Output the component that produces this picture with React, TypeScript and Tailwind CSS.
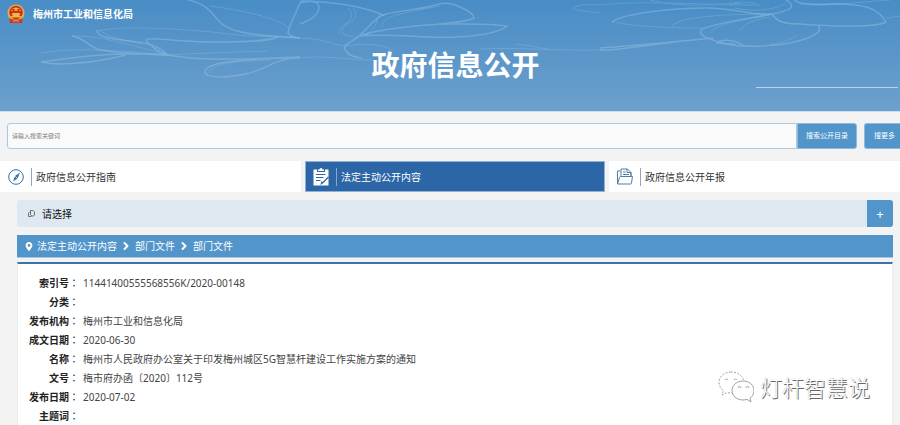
import { ChevronRight } from "lucide-react";
import { FaMapMarkerAlt } from "react-icons/fa";

/* ----------------------------- Data ----------------------------- */
const records: { label: string; value: string }[] = [
    { label: "索引号", value: "11441400555568556K/2020-00148" },
    { label: "分类", value: "" },
    { label: "发布机构", value: "梅州市工业和信息化局" },
    { label: "成文日期", value: "2020-06-30" },
    { label: "名称", value: "梅州市人民政府办公室关于印发梅州城区5G智慧杆建设工作实施方案的通知" },
    { label: "文号", value: "梅市府办函〔2020〕112号" },
    { label: "发布日期", value: "2020-07-02" },
    { label: "主题词", value: "" },
];

const crumbs = ["法定主动公开内容", "部门文件", "部门文件"];

/* ----------------------------- Icons ----------------------------- */
function Emblem() {
    return (
        <svg viewBox="0 0 36 38" className="h-5 w-[18px] shrink-0" aria-hidden="true">
            <circle cx="18" cy="17" r="17" fill="#d9b54a" />
            <circle cx="18" cy="16" r="13.5" fill="#d42a1c" />
            <path d="M18 4l1.4 3.6h3.8l-3 2.3 1.2 3.7-3.4-2.2-3.4 2.2 1.2-3.7-3-2.3h3.8z" fill="#f3cf4b" />
            <circle cx="10" cy="12" r="1.3" fill="#f3cf4b" />
            <circle cx="26" cy="12" r="1.3" fill="#f3cf4b" />
            <circle cx="12" cy="8" r="1.1" fill="#f3cf4b" />
            <circle cx="24" cy="8" r="1.1" fill="#f3cf4b" />
            <path d="M11 17h14l2 3h-2v3h3v3H8v-3h3v-3H9z" fill="#e8bd45" />
            <path d="M5 28c5 2 9 2 13 0 4 2 8 2 13 0l-1 9H6z" fill="#d8321f" />
            <path d="M11 31h14M12 35l6-3 6 3" fill="none" stroke="#e8bd45" strokeWidth="1.4" />
        </svg>
    );
}

function CompassIcon() {
    return (
        <svg viewBox="0 0 32 32" className="h-4 w-4 shrink-0" fill="none" aria-hidden="true">
            <circle cx="16" cy="16" r="14.6" stroke="#356f9f" strokeWidth="2" />
            <path d="M24 7l-5 12-9 6 4-11z" fill="#356f9f" />
            <path d="M14.5 14.5l4 4" stroke="#fff" strokeWidth="1.6" />
        </svg>
    );
}

function ClipboardIcon() {
    return (
        <svg viewBox="0 0 32 36" className="h-[18px] w-4 shrink-0" aria-hidden="true">
            <path d="M2 3h6v5h16V3h6a1 1 0 011 1v30a1 1 0 01-1 1H2a1 1 0 01-1-1V4a1 1 0 011-1z" fill="#fff" />
            <path d="M10 3h3a3 3 0 016 0h3v3H10z" fill="#fff" />
            <path d="M6 13h19M6 19h15M6 25h9" stroke="#2d66a4" strokeWidth="2.2" />
            <path d="M31 18L20 29l-3 2 1-4" fill="none" stroke="#2d66a4" strokeWidth="2.6" />
        </svg>
    );
}

function FolderIcon() {
    return (
        <svg
            viewBox="0 0 32 34"
            className="h-[17px] w-4 shrink-0"
            fill="none"
            stroke="#4f7ea8"
            strokeWidth="2"
            strokeLinejoin="round"
            aria-hidden="true"
        >
            <path d="M1 32V6h6M28 17V9" />
            <path d="M8 17V2h13l7 7v8M20 2v7h8" />
            <path d="M12 8h5M12 13h12" />
            <path d="M1 32l4-13c0-1 1-2 2-2h24l-2 13c0 1-1 2-2 2z" />
        </svg>
    );
}

function PagesIcon() {
    return (
        <svg viewBox="0 0 14 14" className="h-[7px] w-[7px] shrink-0" fill="none" stroke="#555" strokeWidth="1.6" aria-hidden="true">
            <path d="M5 1h5l3 3v6l-2 2H8L5 10z" />
            <path d="M4 3L1 6v7h6" />
        </svg>
    );
}

function ChatIcon() {
    return (
        <svg viewBox="0 0 36 32" className="h-8 w-9 shrink-0" fill="#fff" stroke="#8a8a8a" strokeWidth="0.8" aria-hidden="true">
            <path d="M13 1C6 1 1 5.500 1 11.500c0 3.500 1.700 6 4.500 8L4 24l5-2.500c1.500.4 3 .6 4.500.5C20 22 26 18 26 11.500 26 5.500 20 1 13 1z" strokeDasharray="2 1.5" />
            <path d="M25 10c-6 0-11 4-11 9.500S19 29 25 29c1.400 0 2.700-.2 4-.6l4 2.400-1-3.700c2.400-1.800 4-4.400 4-7.600C36 14 31 10 25 10z" />
            <path d="M7 9a1.700 1.700 0 013 0M16 9a1.700 1.700 0 013 0M20 17a1.500 1.500 0 013 0M28 17a1.500 1.500 0 013 0" fill="none" />
        </svg>
    );
}

/* ----------------------------- Header art ----------------------------- */
function FloralLines() {
    return (
        <svg
            viewBox="0 0 900 111"
            preserveAspectRatio="none"
            className="absolute inset-0 h-full w-full"
            fill="none"
            stroke="#a9cdea"
            aria-hidden="true"
        >
            <g strokeWidth="1.5" opacity="0.36">
                <path d="M188 0C207 3 212 14 220 22C230 33 252 35 300 38" />
                <path d="M168 55C158 52 150 46 146 40C150 36 170 42 210 42C250 42 270 41 278 37" />
                <path d="M97 30C95 39 125 40 145 43C157 46 163 50 168 55C205 62 250 58 300 58" />
                <path d="M72 36C84 38 86 44 97 49C115 54 145 54 168 55" />
                <path d="M168 55C110 52 75 57 41 62C65 67 100 61 126 55" />
                <path d="M205 73C202 61 250 59 300 57C270 60 265 71 245 74C222 79 207 77 205 73" />
                <path d="M300 24C312 20 322 12 318 4C315 0 307 1 300 3C292 22 288 28 288 33C291 38 296 37 300 38" />
                <path d="M300 1C350 2 376 12 383 15C374 19 372 24 362 33C355 42 340 44 346 51C350 57 356 57 362 58" />
                <path d="M383 15C400 10 425 9 435 5C444 2 450 3 455 5C468 10 474 15 474 18C465 23 450 22 440 24" />
                <path d="M360 36C380 28 420 26 440 24C465 24 490 23 507 26C500 32 480 36 455 37C430 39 390 33 360 36" />
                <path d="M612 22C622 14 670 8 705 8C740 8 750 16 772 14C795 10 795 5 786 0" />
                <path d="M772 14C740 20 720 22 702 29C696 36 710 39 722 43C745 49 785 46 805 39C819 34 822 30 818 25" />
                <path d="M772 14C777 22 785 24 800 24C840 27 878 27 886 22C878 8 865 4 835 4C815 5 800 5 794 0" />
                <path d="M600 50C630 50 640 44 714 38M600 48C640 45 670 42 705 39" />
                <path d="M716 43C722 39 736 39 745 47M716 43L735 44" />
            </g>
            <g strokeWidth="1" opacity="0.26">
                <path d="M97 31C120 25 190 29 230 34C250 37 280 36 300 38" />
                <path d="M72 36C100 35 130 45 168 55M41 53C70 48 110 49 165 55" />
                <path d="M207 74C215 62 240 61 270 60M210 6C240 10 280 18 288 28" />
                <path d="M268 51C240 52 200 53 168 55M100 31C112 39 130 41 142 44" />
                <path d="M353 8C365 24 333 23 345 35L358 38M348 8C362 24 330 26 341 35" />
                <path d="M382 27C380 15 410 12 440 6M366 35C385 20 370 16 385 15" />
                <path d="M300 38C320 38 335 45 345 46C360 44 385 43 393 51M300 58C325 55 350 60 372 60" />
                <path d="M573 8C580 4 590 4 600 5C640 0 700 5 760 5M573 9C580 11 590 12 600 13" />
                <path d="M480 49C520 47 560 51 600 50M515 44C530 46 540 47 550 50M612 22C640 27 670 28 702 28" />
                <path d="M672 26C680 16 730 14 772 14M650 0C680 8 720 5 740 2M711 33C712 26 730 22 770 15" />
                <path d="M740 31C742 25 752 20 770 17M770 45C785 42 795 38 796 35M800 4C840 5 860 2 890 0" />
                <path d="M730 6C735 2 752 1 757 4M735 8C748 11 770 12 785 4M886 18L900 16" />
            </g>
        </svg>
    );
}

/* ----------------------------- Tabs ----------------------------- */
function Tab({
                 icon,
                 label,
                 active = false,
             }: {
    icon: React.ReactNode;
    label: string;
    active?: boolean;
}) {
    return (
        <a
            href="#"
            aria-current={active ? "page" : undefined}
            className={
                active
                    ? "flex h-[31px] items-center border border-[#8fb2d6] bg-[#2c66a6] px-[7px] text-white"
                    : "flex h-[31px] items-center border border-white bg-white px-[7px] text-[#333]"
            }
        >
            {icon}
            <span className="ml-[7px] border-l border-[#8fa6cb] py-px pl-1 text-[10px] leading-4">{label}</span>
        </a>
    );
}

/* ----------------------------- Page ----------------------------- */
export default function App() {
    return (
        <div className="relative flex min-h-screen flex-col overflow-hidden bg-[#f3f3f3] font-['Noto_Sans','Noto_Sans_CJK_SC',sans-serif] text-[#333]">
            <header className="relative h-28 border-b border-[#c9dff0] bg-linear-to-b from-[#488dc6] via-[#5b96c9] to-[#6ca0ce] text-white">
                <FloralLines />
                <div className="relative flex items-center gap-2 pt-1 pl-[7px]">
                    <Emblem />
                    <span className="text-[10px] leading-5 font-bold">梅州市工业和信息化局</span>
                </div>
                <h1 className="relative mt-5 pl-[11px] text-center text-[28px] leading-[43px] font-bold">政府信息公开</h1>
                <div className="relative mr-[2px] ml-auto h-px w-[142px] bg-[#b9d4ea]" />
            </header>

            <form className="mt-[11px] flex h-[26px] pl-[7px] text-[7px]" onSubmit={(e) => e.preventDefault()}>
                <input
                    type="text"
                    aria-label="请输入搜索关键词"
                    placeholder="请输入搜索关键词"
                    className="min-w-0 flex-1 rounded-l-[3px] border border-[#a9c9e1] bg-[#fafafa] px-1 text-[6px] placeholder:text-[#777]"
                />
                <button type="submit" className="w-[60px] rounded-r-[3px] border border-[#8fbadb] bg-[#5195ca] text-white">
                    搜索公开目录
                </button>
                <button type="button" className="ml-[7px] w-9 rounded-l-[3px] border border-r-0 border-[#8fbadb] bg-[#5195ca] pl-1 text-white">
                    搜更多
                </button>
            </form>

            <nav className="mt-3 grid grid-cols-[301fr_300fr_291fr] gap-1">
                <Tab icon={<CompassIcon />} label="政府信息公开指南" />
                <Tab icon={<ClipboardIcon />} label="法定主动公开内容" active />
                <Tab icon={<FolderIcon />} label="政府信息公开年报" />
            </nav>

            <main className="mr-[7px] ml-[17px] flex grow flex-col pt-2">
                <div className="flex h-[27px] items-center rounded-[3px] bg-[#dee8f1] pl-[11px]">
                    <PagesIcon />
                    <span className="ml-[7px] text-[10px] leading-4 text-[#111]">请选择</span>
                    <button type="button" aria-label="展开" className="ml-auto h-full w-[26px] rounded-r-[3px] bg-[#5195ca] text-[13px] leading-4 text-white">
                        +
                    </button>
                </div>

                <nav className="mt-2 flex h-[23px] items-center border-b border-[#a5c8e4] bg-[#5195ca] pl-2 text-[10px] leading-4 text-white">
                    <FaMapMarkerAlt className="mr-1 h-[9px] w-2 shrink-0" />
                    {crumbs.map((crumb, i) => (
                        <span key={i} className="flex items-center">
                            {i > 0 && <ChevronRight className="mx-[3px] h-3 w-3" strokeWidth={4} />}
                            <a href="#">{crumb}</a>
                        </span>
                    ))}
                </nav>

                <section className="mt-1 grow border border-t-2 border-[#ececec] border-t-[#3d72a8] bg-white pt-[10px] pl-2">
                    <table className="text-[10px] leading-[19px]">
                        <tbody>
                            {records.map(({ label, value }) => (
                                <tr key={label}>
                                    <th scope="row" className="w-[53px] p-0 text-right font-bold whitespace-nowrap text-[#222]">
                                        {label}
                                        <span className="font-['Noto_Sans_CJK_TC',sans-serif] leading-none font-normal" lang="zh-TW">：</span>
                                    </th>
                                    <td className="p-0 pl-1 text-[#444]">{value}</td>
                                </tr>
                            ))}
                        </tbody>
                    </table>
                </section>
            </main>

            {/* account signature, floats over the panel */}
            <div className="absolute right-[30px] bottom-6 flex items-center gap-[6px]">
                <ChatIcon />
                <span className="text-[22px] leading-8 font-light text-white [text-shadow:1px_1px_0_#666,0_0_1px_#aaa]">灯杆智慧说</span>
            </div>
        </div>
    );
}
